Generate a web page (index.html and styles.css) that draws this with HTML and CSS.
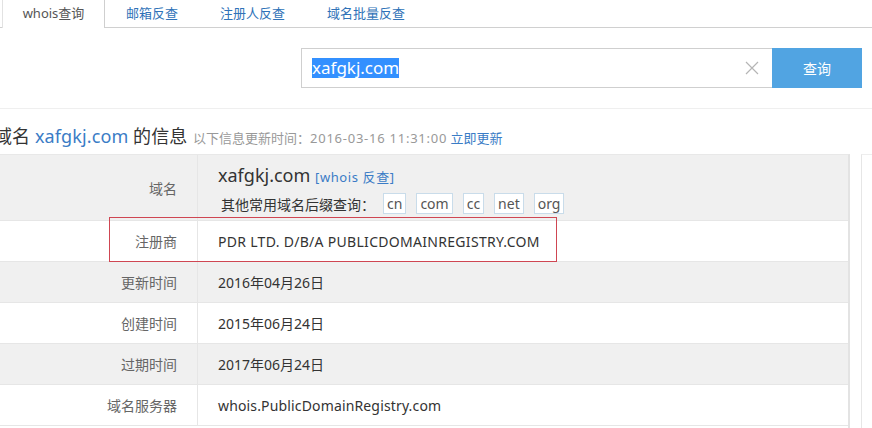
FILE: index.html
```html
<!DOCTYPE html>
<html lang="zh-CN">
<head>
<meta charset="utf-8">
<title>whois查询</title>
<link rel="stylesheet" href="styles.css">
</head>
<body>
<div class="tabs">
  <div class="tab active">whois查询</div>
  <div class="tab">邮箱反查</div>
  <div class="tab">注册人反查</div>
  <div class="tab">域名批量反查</div>
</div>
<div class="search">
  <div class="input">
    <span class="sel">xafgkj.com</span>
    <svg class="clear" width="14" height="14" viewBox="0 0 14 14"><path d="M1 1L13 13M13 1L1 13" stroke="#b5b5b5" stroke-width="1.2" fill="none"/></svg>
  </div>
  <div class="btn">查询</div>
</div>
<div class="heading">
  <span class="big">域名 <span class="blue">xafgkj.com</span> 的信息</span>
  <span class="small">以下信息更新时间：<span class="num">2016-03-16 11:31:00</span> <span class="blue">立即更新</span></span>
</div>
<div class="main">
  <div class="table">
    <div class="row grey tall">
      <div class="label">域名</div>
      <div class="value">
        <div class="dom">xafgkj.com <span class="blue link">[whois 反查]</span></div>
        <div class="other"><span class="olabel">其他常用域名后缀查询：</span><span class="sfx">cn</span><span class="sfx">com</span><span class="sfx">cc</span><span class="sfx">net</span><span class="sfx">org</span></div>
      </div>
    </div>
    <div class="row">
      <div class="label">注册商</div>
      <div class="value latin">PDR LTD. D/B/A PUBLICDOMAINREGISTRY.COM</div>
    </div>
    <div class="row grey">
      <div class="label">更新时间</div>
      <div class="value">2016年04月26日</div>
    </div>
    <div class="row">
      <div class="label">创建时间</div>
      <div class="value">2015年06月24日</div>
    </div>
    <div class="row grey">
      <div class="label">过期时间</div>
      <div class="value">2017年06月24日</div>
    </div>
    <div class="row">
      <div class="label">域名服务器</div>
      <div class="value latin2">whois.PublicDomainRegistry.com</div>
    </div>
    <div class="mark"></div>
  </div>
  <div class="side"></div>
</div>
</body>
</html>
```
FILE: styles.css
```css
* { box-sizing: border-box; }
body {
  margin: 0;
  font-family: "Noto Sans", "Noto Sans CJK SC", sans-serif;
  font-size: 14px;
  color: #333;
  background: #fff;
  overflow: hidden;
}
.blue { color: #3a7cc6; }
.tabs {
  display: flex;
  height: 28px;
  border-bottom: 1px solid #d0d0d0;
}
.tab {
  padding: 0 21px;
  line-height: 26px;
  font-size: 13px;
  color: #2f72b8;
}
.tab.active {
  margin-left: 2px;
  width: 103px;
  padding: 0;
  text-align: center;
  color: #555;
  background: #fff;
  border-left: 1px solid #e2e2e2;
  border-right: 1px solid #cfcfcf;
  height: 28px;
}
.search {
  display: flex;
  justify-content: flex-end;
  padding: 20px 10px 20px 0;
  border-bottom: 1px solid #efefef;
  height: 81px;
}
.input {
  width: 471px;
  height: 40px;
  border: 1px solid #cfcfcf;
  border-right: none;
  display: flex;
  align-items: center;
  padding-left: 10px;
  padding-right: 13px;
}
.sel {
  background: #3390ff;
  color: #fff;
  font-size: 17px;
  line-height: 20px;
}
.input .clear { margin-left: auto; }
.btn {
  width: 90px;
  height: 40px;
  background: #51a4e2;
  color: #fff;
  font-size: 14px;
  display: flex;
  align-items: center;
  justify-content: center;
}
.heading {
  margin-left: -6px;
  padding-top: 13px;
  height: 45px;
  white-space: nowrap;
}
.big { font-size: 18px; color: #333; letter-spacing: 0.1px; }
.small { font-size: 13px; color: #999; margin-left: 2px; }
.small .num { letter-spacing: 0.75px; }
.main {
  display: flex;
}
.table {
  position: relative;
  width: 850px;
  border-top: 1px solid #e8e8e8;
  border-right: 2px solid #e3e3e3;
}
.row {
  display: flex;
  height: 41px;
  border-bottom: 1px solid #e6e6e6;
}
.row.tall { height: 66px; }
.row.grey { background: #f0f0f0; }
.label {
  width: 198px;
  flex: none;
  border-right: 1px solid #e6e6e6;
  display: flex;
  align-items: center;
  justify-content: flex-end;
  padding-right: 20px;
  color: #666;
}
.value {
  padding-left: 20px;
  display: flex;
  flex-direction: column;
  justify-content: center;
  color: #333;
}
.value.latin { letter-spacing: 0.3px; }
.value.latin2 { letter-spacing: 0.15px; }
.dom { font-size: 18px; line-height: 24px; margin-top: 2px; }
.dom .link { font-size: 13px; letter-spacing: 0.6px; }
.other {
  display: flex;
  align-items: center;
  font-size: 14px;
  margin-top: 4px;
  padding-left: 3px;
}
.olabel { width: 162px; flex: none; }
.sfx {
  display: inline-block;
  height: 21px;
  line-height: 19px;
  padding: 0 3px;
  border: 1px solid #c9dcea;
  background: #fff;
  font-size: 14px;
  color: #555;
  margin-left: 10px;
}
.olabel + .sfx { margin-left: 0; }
.mark {
  position: absolute;
  left: 109px;
  top: 62px;
  width: 448px;
  height: 45px;
  border: 1px solid #cf4652;
}
.side {
  margin-left: 11px;
  flex: 1;
  border-left: 1px solid #e6e6e6;
  border-top: 1px solid #eeeeee;
  height: 300px;
}
```
